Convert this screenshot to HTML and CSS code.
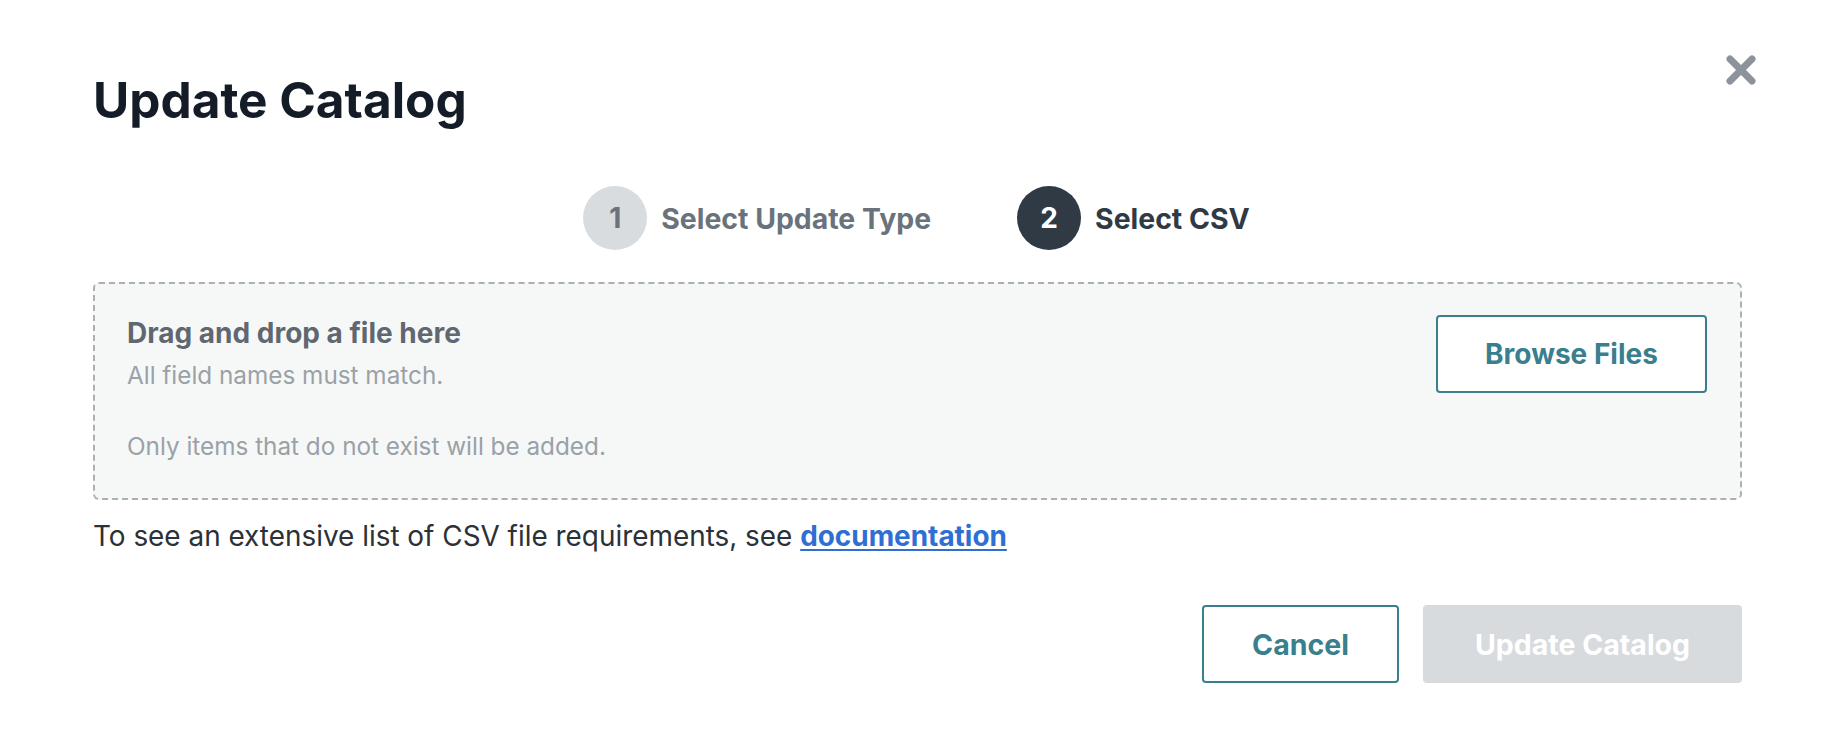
FILE: index.html
```html
<!DOCTYPE html>
<html lang="en">
<head>
<meta charset="utf-8">
<title>Update Catalog</title>
<link rel="stylesheet" href="styles.css">
</head>
<body>
<div class="modal">
  <button class="close" aria-label="Close">
    <svg width="30" height="30" viewBox="0 0 30 30"><path d="M4 4 L26 26 M26 4 L4 26" stroke="#8c939a" stroke-width="7" stroke-linecap="round" fill="none"/></svg>
  </button>
  <h1 class="title">Update Catalog</h1>
  <div class="steps">
    <div class="step step-done">
      <span class="step-num">1</span>
      <span class="step-label">Select Update Type</span>
    </div>
    <div class="step step-active">
      <span class="step-num">2</span>
      <span class="step-label">Select CSV</span>
    </div>
  </div>
  <div class="dropzone">
    <div class="drop-text">
      <div class="drop-title">Drag and drop a file here</div>
      <div class="drop-sub">All field names must match.</div>
      <div class="drop-sub drop-note">Only items that do not exist will be added.</div>
    </div>
    <button class="btn btn-outline btn-browse">Browse Files</button>
  </div>
  <p class="hint">To see an extensive list of CSV file requirements, see <a href="#" class="link">documentation</a></p>
  <div class="footer">
    <button class="btn btn-outline btn-cancel">Cancel</button>
    <button class="btn btn-disabled">Update Catalog</button>
  </div>
</div>
</body>
</html>
```
FILE: styles.css
```css
* { box-sizing: border-box; }
html, body { margin: 0; background: #ffffff; }
body { font-family: "Inter", "Lato", sans-serif; color: #2b3137; }

.modal {
  position: relative;
  padding: 70px 92px 0 93px;
}

.close {
  position: absolute;
  top: 55px;
  right: 78px;
  width: 30px;
  height: 30px;
  padding: 0;
  border: 0;
  background: none;
  cursor: pointer;
}
.close svg { display: block; }

.title {
  margin: 0;
  font-size: 49.5px;
  line-height: 60px;
  font-weight: 700;
  color: #141d27;
}

.steps {
  display: flex;
  justify-content: center;
  gap: 86px;
  margin-top: 56px;
  padding-right: 2px;
}
.step {
  display: flex;
  align-items: center;
  gap: 14px;
}
.step-num {
  width: 64px;
  height: 64px;
  border-radius: 50%;
  display: flex;
  align-items: center;
  justify-content: center;
  font-size: 28px;
  font-weight: 700;
}
.step-label {
  font-size: 28.4px;
  font-weight: 700;
}
.step-done .step-num { background: #d9dcdf; color: #6a737b; }
.step-done .step-label { color: #6a737b; }
.step-active .step-num { background: #2f3a45; color: #ffffff; }
.step-active .step-label { color: #2f3a45; }

.dropzone {
  margin-top: 32px;
  height: 218px;
  border: 2px dashed #aab0b5;
  border-radius: 6px;
  background: #f6f8f8;
  display: flex;
  justify-content: space-between;
  align-items: flex-start;
  padding: 31px 33px 0 32px;
}
.drop-title {
  margin-top: 1px;
  font-size: 28px;
  line-height: 34px;
  font-weight: 700;
  color: #5f6870;
}
.drop-sub {
  font-size: 24.3px;
  line-height: 34px;
  color: #9aa1a7;
  margin-top: 8px;
}
.drop-note { margin-top: 37px; }

.btn {
  font-family: "Inter", "Lato", sans-serif;
  font-size: 28.5px;
  font-weight: 700;
  border-radius: 4px;
  height: 78px;
  cursor: pointer;
}
.btn-outline {
  background: #ffffff;
  border: 2px solid #3a7f8e;
  color: #3a7f8e;
}
.btn-browse { width: 271px; font-size: 28px; }
.btn-cancel { width: 197px; }
.btn-disabled {
  width: 319px;
  background: #d8dbde;
  border: 2px solid #d8dbde;
  color: #ffffff;
}

.hint {
  margin: 20px 0 0 0;
  font-size: 27.9px;
  line-height: 32px;
  color: #2b3137;
}
.link {
  color: #2f6fd3;
  font-weight: 700;
  text-decoration: underline;
  text-underline-offset: 3px;
}

.footer {
  display: flex;
  justify-content: flex-end;
  gap: 24px;
  margin-top: 53px;
}
```
